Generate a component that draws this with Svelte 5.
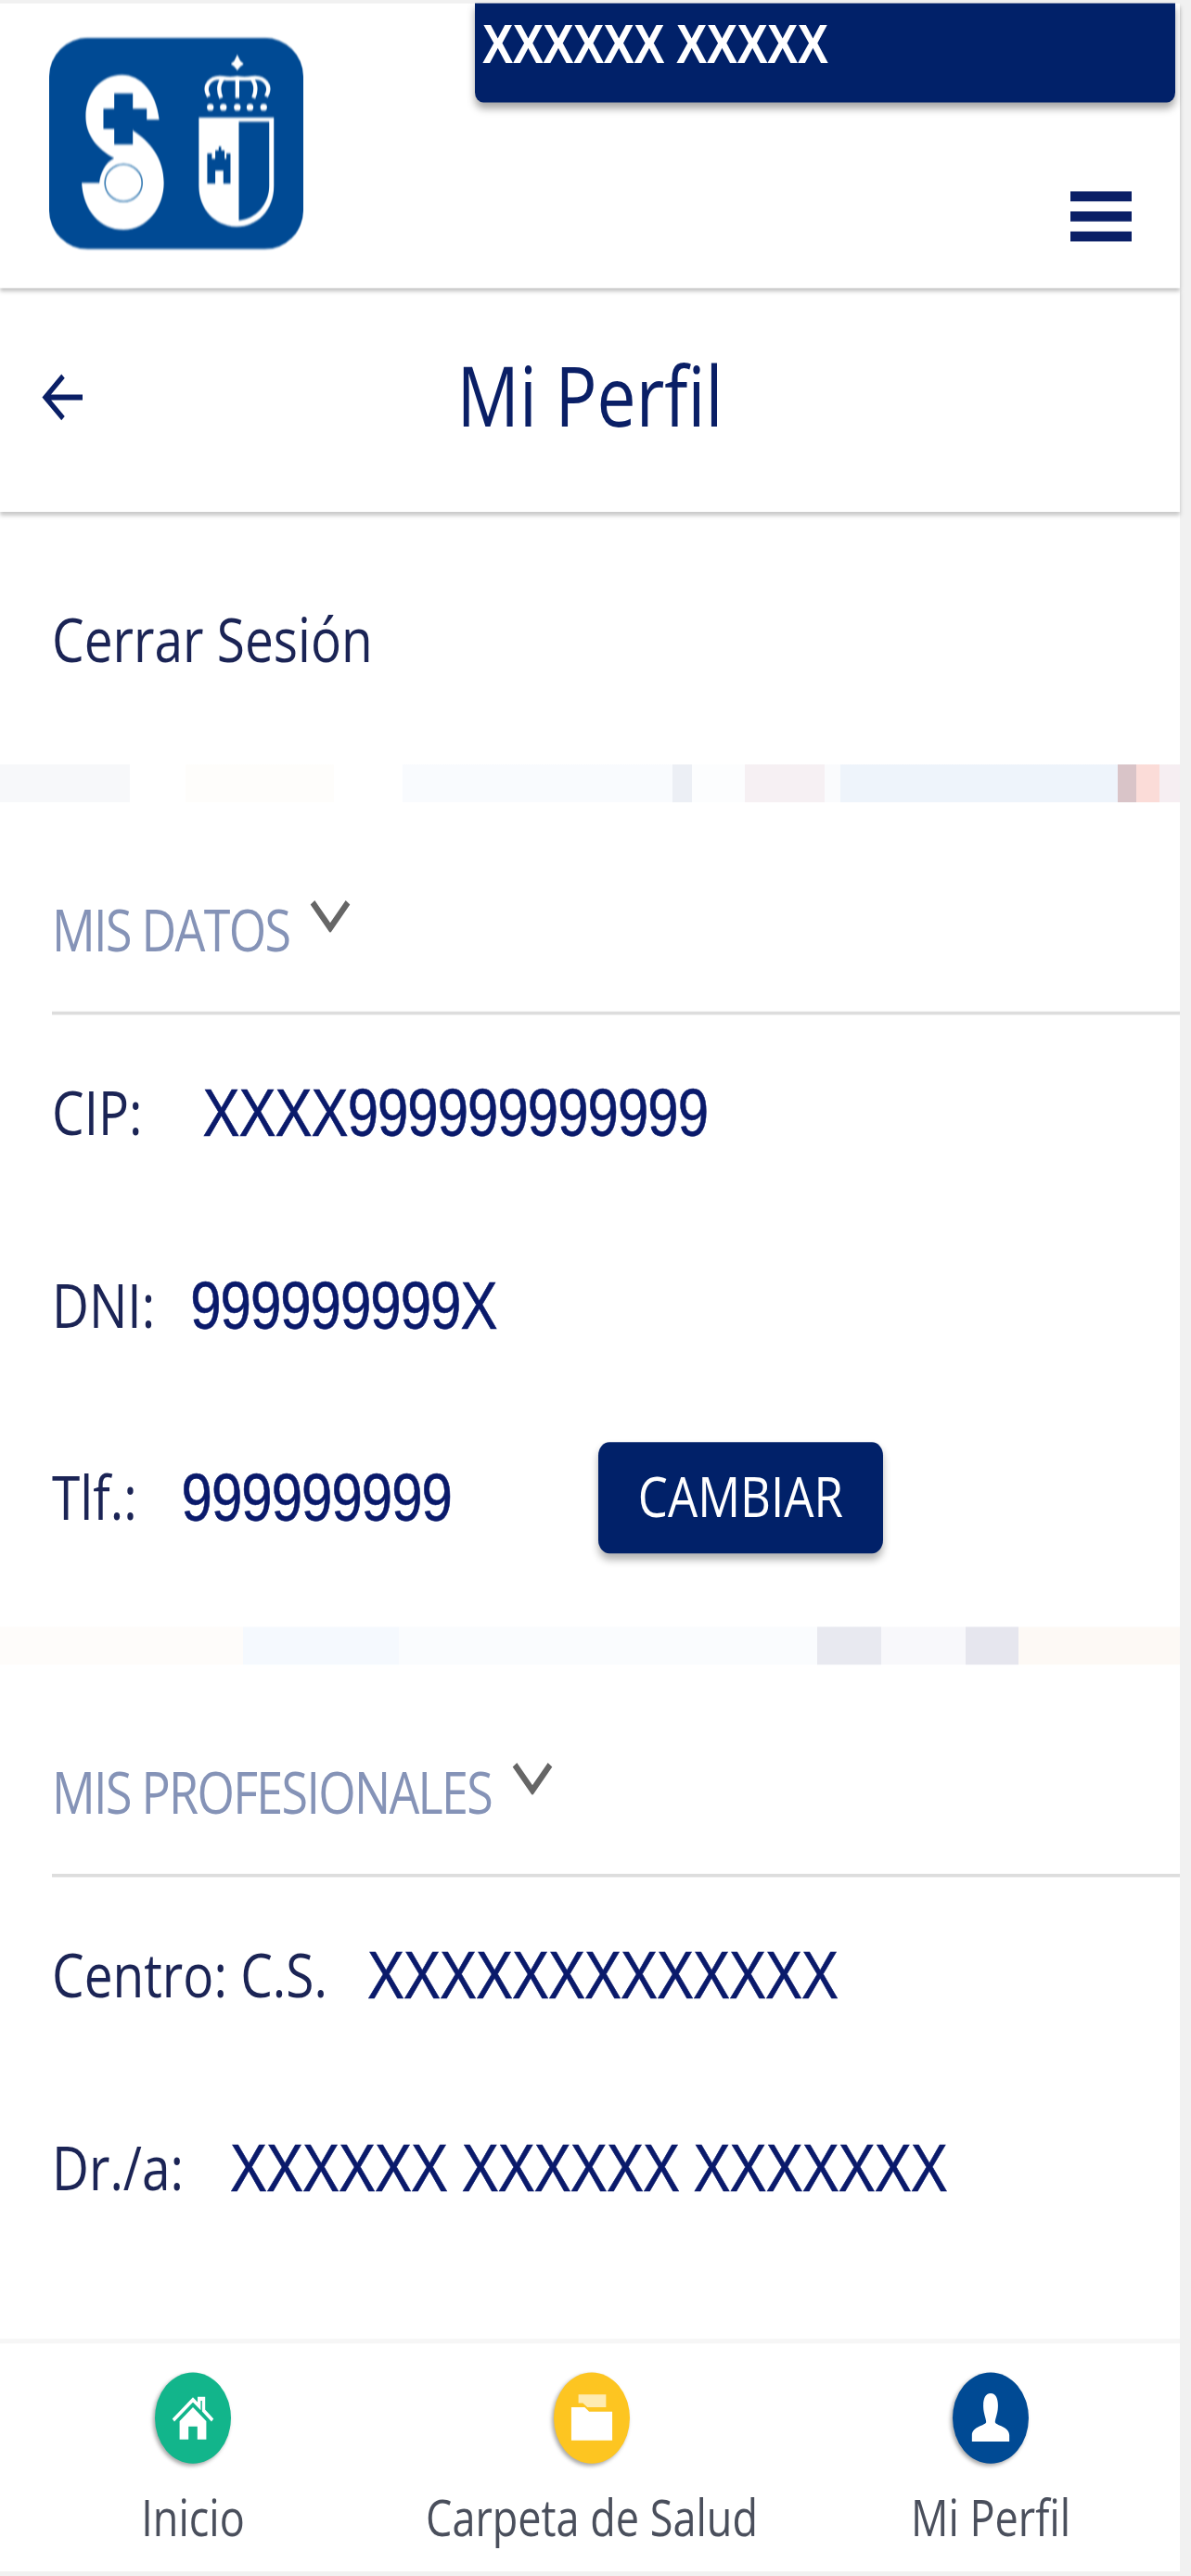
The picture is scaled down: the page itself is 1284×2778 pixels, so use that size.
<script>
  const datos = [
    { key: "cip", label: "CIP:", value: "XXXX999999999999" },
    { key: "dni", label: "DNI:", value: "999999999X" },
    { key: "tlf", label: "Tlf.:", value: "999999999", action: "CAMBIAR" }
  ];
  const profesionales = [
    { key: "centro", label: "Centro: C.S.", value: "XXXXXXXXXXXXX" },
    { key: "dr", label: "Dr./a:", value: "XXXXXX XXXXXX XXXXXXX" }
  ];
</script>

{#snippet chevron()}
  <svg class="chevron" viewBox="0 0 44 30" aria-hidden="true">
    <path d="M3 3 L22 26 L41 3" fill="none" stroke="#666" stroke-width="6" />
  </svg>
{/snippet}

{#snippet row(item)}
  <div class={`row ${item.key}`}>
    <span class="label">{item.label}</span>
    <span class="value">{item.value}</span>
    {#if item.action}
      <button class="action">{item.action}</button>
    {/if}
  </div>
{/snippet}

<div class="viewport">
  <div class="page">
    <header class="top">
      <svg class="logo" viewBox="70 60 820 685" preserveAspectRatio="none" aria-hidden="true">
        <rect x="70" y="60" width="820" height="685" rx="125" ry="125" fill="#004a94" />
        <path fill="#fff" d="M425 325 C415 235 365 180 305 180 C235 180 188 240 188 315 C188 375 225 420 280 450 C250 465 235 500 232 530 L175 530 C180 620 235 682 310 682 C385 682 440 610 440 530 C440 450 395 395 340 360 L340 325 Z" />
        <path fill="#004a94" d="M280 240 H340 V290 H385 V355 H340 V405 H280 V355 H245 V290 H280 Z" />
        <circle cx="310" cy="530" r="60" fill="#fff" stroke="#3d7fb5" stroke-width="5" />
        <path fill="#fff" d="M677 115 L687 135 L698 145 L687 153 L677 165 L667 153 L656 145 L667 135 Z" />
        <path fill="none" stroke="#fff" stroke-width="13" d="M585 250 C565 215 590 185 630 190 C655 195 677 190 677 190 C677 190 700 195 725 190 C765 185 790 215 770 250 M632 192 C612 210 618 240 625 255 M677 192 V255 M722 192 C742 210 736 240 729 255" />
        <g fill="#fff">
          <circle cx="590" cy="285" r="11" />
          <circle cx="632" cy="285" r="11" />
          <circle cx="677" cy="285" r="11" />
          <circle cx="718" cy="285" r="11" />
          <circle cx="762" cy="285" r="11" />
        </g>
        <path fill="#fff" d="M553 318 H795 V540 C795 620 740 672 675 672 C610 672 553 620 553 540 Z" />
        <path fill="#004a94" d="M682 332 H780 V540 C780 600 735 648 682 652 Z" />
        <path fill="#004a94" d="M580 532 V435 H595 V452 H606 V425 H617 V412 H625 V425 H636 V452 H642 V435 H655 V532 H632 V490 H606 V532 Z" />
      </svg>
      <div class="top-right">
        <div class="user">XXXXXX XXXXX</div>
        <div class="menu" aria-label="Menú">
          <span></span>
          <span></span>
          <span></span>
        </div>
      </div>
    </header>

    <div class="titlebar">
      <svg class="back" viewBox="0 0 46 46" aria-hidden="true">
        <path d="M44 23 H5 M23 4 L4 23 L23 42" fill="none" stroke="#0a1f66" stroke-width="5" />
      </svg>
      <h1>Mi Perfil</h1>
    </div>

    <main>
      <div class="logout">Cerrar Sesión</div>
      <div class="band band-a"></div>

      <section class="mis-datos">
        <h2>MIS DATOS {@render chevron()}</h2>
        {#each datos as item (item.key)}
          {@render row(item)}
        {/each}
      </section>

      <div class="band band-b"></div>

      <section class="mis-prof">
        <h2>MIS PROFESIONALES {@render chevron()}</h2>
        {#each profesionales as item (item.key)}
          {@render row(item)}
        {/each}
      </section>
    </main>

    <nav>
      <div class="tab">
        <div class="dot home">
          <svg viewBox="0 0 50 50" aria-hidden="true">
            <path d="M3 27 L25 8 L32 14 V7 H37 V18 L47 27" fill="none" stroke="#fff" stroke-width="3.5" />
            <path fill="#fff" d="M25 15 L40 28 V45 H30 V33 H20 V45 H10 V28 Z" />
          </svg>
        </div>
        <span>Inicio</span>
      </div>
      <div class="tab">
        <div class="dot folder">
          <svg viewBox="0 0 50 50" aria-hidden="true">
            <path fill="#fff" opacity="0.65" d="M10 3 H41 V15 H20 L15 11 H10 Z" />
            <path fill="#fff" d="M2 15 H17 L22 19 H48 V46 H2 Z" />
          </svg>
        </div>
        <span>Carpeta de Salud</span>
      </div>
      <div class="tab">
        <div class="dot person">
          <svg viewBox="0 0 50 50" aria-hidden="true">
            <path fill="#fff" d="M25 2 C32 2 34 9 33 17 C32 23 30 26 30 29 C31 32 46 33 46 41 V47 H4 V41 C4 33 19 32 20 29 C20 26 18 23 17 17 C16 9 18 2 25 2 Z" />
          </svg>
        </div>
        <span>Mi Perfil</span>
      </div>
    </nav>
  </div>
</div>

<style>
  :global(body) {
    margin: 0;
    background: #f1f1f1;
  }

  .viewport {
    width: 1284px;
    height: 2778px;
    overflow: hidden;
  }

  /* the whole capture is stretched vertically */
  .page {
    box-sizing: border-box;
    width: 1272px;
    height: 2315px;
    padding-top: 3px;
    display: flex;
    flex-direction: column;
    transform: scaleY(1.2);
    transform-origin: top left;
    font-family: "Open Sans", sans-serif;
    color: #1b2455;
  }

  .top {
    height: 256px;
    flex: none;
    display: flex;
    align-items: flex-start;
    background: #fff;
    box-shadow: 0 3px 4px rgba(0, 0, 0, 0.25);
    position: relative;
    z-index: 2;
  }

  .logo {
    width: 274px;
    height: 190px;
    margin: 31px 0 0 53px;
    flex: none;
    filter: blur(0.7px);
  }

  .top-right {
    margin-left: 185px;
    width: 755px;
    display: flex;
    flex-direction: column;
  }

  .user {
    box-sizing: border-box;
    height: 89px;
    padding: 7px 0 0 8px;
    border-radius: 0 0 9px 9px;
    background: #012169;
    color: #fff;
    font-family: "Liberation Sans", sans-serif;
    font-weight: 700;
    font-size: 50px;
    line-height: 60px;
    letter-spacing: -0.7px;
    box-shadow: 0 5px 8px rgba(0, 0, 0, 0.35);
  }

  .menu {
    align-self: flex-end;
    width: 66px;
    margin: 80px 47px 0 0;
    display: flex;
    flex-direction: column;
    gap: 9px;
  }

  .menu span {
    height: 9px;
    background: #0a1f66;
  }

  .titlebar {
    box-sizing: border-box;
    height: 201px;
    padding-bottom: 12px;
    flex: none;
    display: flex;
    align-items: center;
    justify-content: center;
    background: #fff;
    position: relative;
    z-index: 1;
    box-shadow: 0 3px 4px rgba(0, 0, 0, 0.22);
  }

  .back {
    position: absolute;
    left: 45px;
    top: 75px;
    width: 46px;
    height: 46px;
  }

  h1 {
    margin: 0;
    font-weight: 400;
    font-size: 75px;
    color: #0a1f66;
  }

  main {
    flex: 1;
    min-height: 0;
    background: #fff;
  }

  .logout {
    height: 227px;
    padding-left: 56px;
    display: flex;
    align-items: center;
    font-size: 55px;
  }

  .band {
    height: 34px;
  }

  .band-a {
    background: linear-gradient(90deg,
      #f7f8fa 0 140px, #fff 140px 200px, #fefdfb 200px 360px, #fff 360px 434px,
      #f9fbfe 434px 725px, #eceff5 725px 746px, #fcfdfe 746px 803px, #f6f0f3 803px 889px,
      #fafbfd 889px 906px, #eef4fb 906px 1205px, #d9c4c8 1205px 1225px, #fbdcd8 1225px 1250px, #f6eef2 1250px);
  }

  .band-b {
    margin-top: 31px;
    background: linear-gradient(90deg,
      #fefcfa 0 262px, #f5f9fe 262px 430px, #fafcfe 430px 881px, #e8e9f0 881px 950px,
      #f8f8fb 950px 1041px, #e6e6ee 1041px 1098px, #fdf9f5 1098px);
  }

  h2 {
    box-sizing: border-box;
    height: 191px;
    margin: 0 0 0 56px;
    padding-top: 80px;
    display: flex;
    align-items: flex-start;
    gap: 22px;
    border-bottom: 3px solid #dddddd;
    font-weight: 400;
    font-size: 52px;
    line-height: 68px;
    letter-spacing: -1.7px;
    color: #8593b7;
  }

  .chevron {
    width: 44px;
    height: 30px;
    margin-top: 7px;
    flex: none;
  }

  .row {
    height: 173px;
    padding-left: 56px;
    display: flex;
    align-items: center;
  }

  .label {
    font-size: 55px;
  }

  .value {
    font-family: "Liberation Sans", sans-serif;
    font-size: 60px;
    letter-spacing: -1px;
    color: #0a1a6b;
    -webkit-text-stroke: 0.5px #0a1a6b;
    position: relative;
    top: 2px;
  }

  .cip .value { margin-left: 65px; }
  .dni .value { margin-left: 38px; }
  .tlf .value { margin-left: 48px; }
  .centro .value { margin-left: 43px; }
  .dr .value { margin-left: 50px; }

  .action {
    box-sizing: border-box;
    width: 307px;
    height: 100px;
    margin: 3px 0 0 158px;
    padding: 0 0 6px;
    border: 0;
    border-radius: 12px;
    background: #012169;
    color: #fff;
    font-family: "Open Sans", sans-serif;
    font-size: 51px;
    box-shadow: 0 5px 8px rgba(0, 0, 0, 0.3);
  }

  nav {
    height: 205px;
    flex: none;
    display: grid;
    grid-template-columns: repeat(3, 430px);
    margin-left: -7px;
    margin-bottom: 4px;
    border-top: 4px solid #f6f6f6;
    background: #fff;
  }

  .tab {
    display: flex;
    flex-direction: column;
    align-items: center;
    padding-top: 26px;
    font-size: 45px;
    color: #4a4f5c;
  }

  .tab span {
    margin-top: 23px;
    line-height: 50px;
    white-space: nowrap;
  }

  .dot {
    width: 82px;
    height: 82px;
    border-radius: 50%;
    display: flex;
    align-items: center;
    justify-content: center;
    box-shadow: -2px 2px 4px rgba(0, 0, 0, 0.35);
  }

  .dot svg {
    width: 48px;
    height: 48px;
    filter: blur(0.6px);
  }

  .home { background: #12b58b; }
  .folder { background: #fdc521; }
  .person { background: #004a94; }
</style>
